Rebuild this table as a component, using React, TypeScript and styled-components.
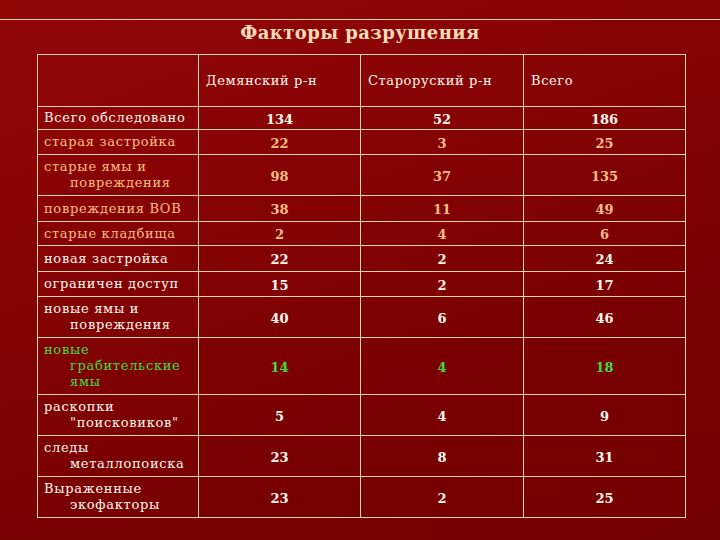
import styled, { createGlobalStyle } from "styled-components";

const GlobalStyle = createGlobalStyle`
  html, body {
    margin: 0;
    padding: 0;
    background: #7c0000;
  }
`;

const Slide = styled.div`
  width: 720px;
  height: 540px;
  overflow: hidden;
  background: linear-gradient(160deg, #930707 0%, #850303 35%, #780000 70%, #730000 100%);
  font-family: "DejaVu Serif", "Liberation Serif", serif;
  color: #fff6ec;
  padding-top: 19px;
  box-sizing: border-box;
`;

const TitleBar = styled.div`
  border-top: 1px solid #f2d2b4;
  height: 35px;
  display: flex;
  justify-content: center;
  padding-top: 1px;
  box-sizing: border-box;
`;

const Title = styled.h1`
  margin: 0;
  font-size: 18px;
  line-height: 24px;
  font-weight: bold;
  color: #fbdcb9;
  letter-spacing: 0.4px;
`;

const Table = styled.table`
  margin-left: 37px;
  width: 648px;
  border-collapse: collapse;
  table-layout: fixed;
  border: 1px solid #f2d2b4;
`;

const Col = styled.col<{ $w: number }>`
  width: ${({ $w }) => $w}px;
`;

type Tone = "white" | "peach" | "green";

const toneColor: Record<Tone, string> = {
  white: "#fff6ec",
  peach: "#f9bd86",
  green: "#44d844",
};

const Row = styled.tr<{ $h: number; $tone: Tone }>`
  height: ${({ $h }) => $h}px;
  color: ${({ $tone }) => toneColor[$tone]};
`;

const HeadCell = styled.th`
  border: 1px solid #f2d2b4;
  font-weight: normal;
  text-align: left;
  font-size: 13px;
  letter-spacing: 0.6px;
  padding: 0 0 0 7px;
  vertical-align: middle;
  color: #fff6ec;
`;

const LabelCell = styled.td`
  border: 1px solid #f2d2b4;
  font-size: 13px;
  line-height: 16px;
  letter-spacing: 0.7px;
  padding: 0 4px 0 32px;
  text-indent: -26px;
  vertical-align: middle;
`;

const NumCell = styled.td`
  border: 1px solid #f2d2b4;
  font-size: 13px;
  font-weight: bold;
  text-align: center;
  vertical-align: middle;
  padding: 2px 0 0;
`;

type Item = {
  label: string;
  values: [string, string, string];
  h: number;
  tone: Tone;
};

const rows: Item[] = [
  { label: "Всего обследовано", values: ["134", "52", "186"], h: 23, tone: "white" },
  { label: "старая застройка", values: ["22", "3", "25"], h: 25, tone: "peach" },
  { label: "старые ямы и повреждения", values: ["98", "37", "135"], h: 41, tone: "peach" },
  { label: "повреждения ВОВ", values: ["38", "11", "49"], h: 26, tone: "peach" },
  { label: "старые кладбища", values: ["2", "4", "6"], h: 24, tone: "peach" },
  { label: "новая застройка", values: ["22", "2", "24"], h: 26, tone: "white" },
  { label: "ограничен доступ", values: ["15", "2", "17"], h: 25, tone: "white" },
  { label: "новые ямы и повреждения", values: ["40", "6", "46"], h: 41, tone: "white" },
  { label: "новые грабительские ямы", values: ["14", "4", "18"], h: 57, tone: "green" },
  { label: "раскопки \"поисковиков\"", values: ["5", "4", "9"], h: 41, tone: "white" },
  { label: "следы металлопоиска", values: ["23", "8", "31"], h: 41, tone: "white" },
  { label: "Выраженные экофакторы", values: ["23", "2", "25"], h: 41, tone: "white" },
];

export default function App() {
  return (
    <>
      <GlobalStyle />
      <Slide>
        <TitleBar>
          <Title>Факторы разрушения</Title>
        </TitleBar>
        <Table>
          <colgroup>
            <Col $w={161} />
            <Col $w={162} />
            <Col $w={163} />
            <Col $w={162} />
          </colgroup>
          <thead>
            <Row $h={52} $tone="white">
              <HeadCell />
              <HeadCell>Демянский р-н</HeadCell>
              <HeadCell>Староруский р-н</HeadCell>
              <HeadCell>Всего</HeadCell>
            </Row>
          </thead>
          <tbody>
            {rows.map((r) => (
              <Row key={r.label} $h={r.h} $tone={r.tone}>
                <LabelCell>{r.label}</LabelCell>
                {r.values.map((v, i) => (
                  <NumCell key={i}>{v}</NumCell>
                ))}
              </Row>
            ))}
          </tbody>
        </Table>
      </Slide>
    </>
  );
}
